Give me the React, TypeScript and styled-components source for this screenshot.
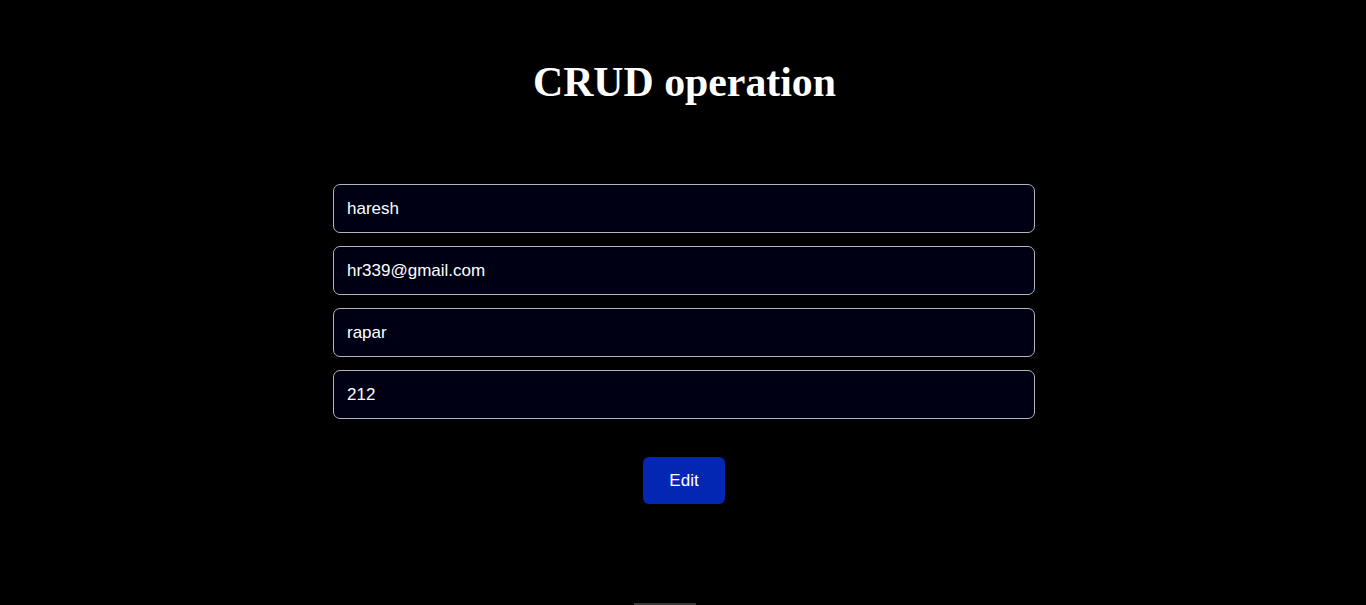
import React from "react";
import styled, { createGlobalStyle } from "styled-components";

const Global = createGlobalStyle`
  html, body { margin: 0; padding: 0; background: #000; }
  body { font-family: "Liberation Sans", Arial, sans-serif; color: #fff; overflow: hidden; }
`;

const Page = styled.div`
  min-height: 605px;
  display: flex;
  flex-direction: column;
  align-items: center;
  background: #000;
  position: relative;
`;

const Title = styled.h1`
  margin: 53px 0 0 3px;
  font-family: "Liberation Serif", "Times New Roman", serif;
  font-weight: 700;
  font-size: 41.8px;
  line-height: 58px;
  color: #fff;
`;

const Form = styled.form`
  margin: 73px 0 0 2px;
  width: 702px;
  display: flex;
  flex-direction: column;
  gap: 13px;
  align-items: center;
`;

const Input = styled.input`
  box-sizing: border-box;
  width: 100%;
  height: 49px;
  padding: 0 13px;
  background: #000014;
  border: 1px solid #b4b4be;
  border-radius: 7px;
  color: #fff;
  font-family: "Liberation Sans", Arial, sans-serif;
  font-size: 17px;
  outline: none;
`;

const Button = styled.button`
  margin-top: 25px;
  width: 82px;
  height: 47px;
  border: none;
  border-radius: 6px;
  background: #0327b2;
  color: #fff;
  font-family: "Liberation Sans", Arial, sans-serif;
  font-size: 17px;
  cursor: pointer;
`;

const ScrollHint = styled.div`
  position: absolute;
  left: 634px;
  bottom: 0;
  width: 62px;
  height: 2px;
  background: #3a3a3a;
`;

export default function App() {
  return (
    <Page>
      <Global />
      <Title>CRUD operation</Title>
      <Form onSubmit={(e) => e.preventDefault()}>
        <Input defaultValue="haresh" />
        <Input defaultValue="hr339@gmail.com" />
        <Input defaultValue="rapar" />
        <Input defaultValue="212" />
        <Button type="submit">Edit</Button>
      </Form>
      <ScrollHint />
    </Page>
  );
}
